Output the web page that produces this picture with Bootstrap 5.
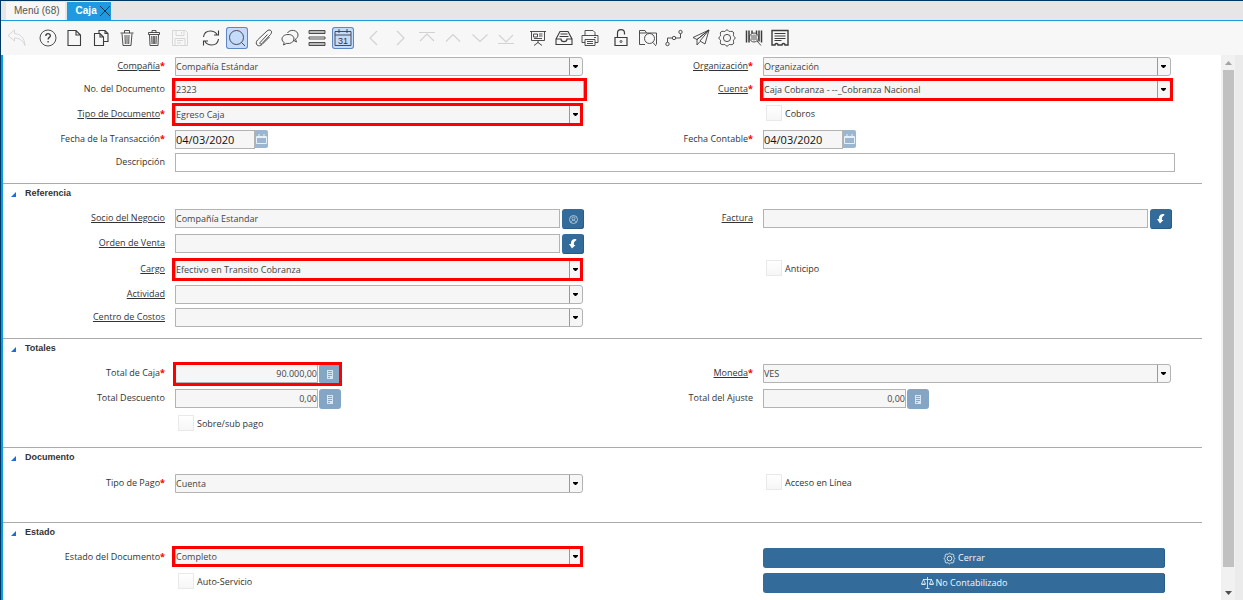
<!DOCTYPE html>
<html lang="es">
<head>
<meta charset="utf-8">
<meta name="viewport" content="width=device-width, initial-scale=1">
<title>Caja</title>
<link href="https://cdn.jsdelivr.net/npm/bootstrap@5.3.0/dist/css/bootstrap.min.css" rel="stylesheet">
<style>
:root { --ink:#333; --line:#b3b3b3; --field:#f6f6f6; --blue:#336b9a; --tab:#1f9ade; }
body { font:9px/12px "Open Sans","Noto Sans",sans-serif; color:var(--ink); background:#fff; border:solid #003764; border-width:1px 0 0 1px; }
/* tabs */
.tabbar { height:20px; background:#e6e6e6; border-bottom:1px solid var(--tab); padding-left:5px; font:10px/18px "Liberation Sans",Arial,sans-serif; }
.tabbar button { border:0; padding:0 5px 0 8px; height:18px; margin-top:1px; background:#f7f7f7; color:#555; }
.tabbar .current { background:var(--tab); color:#fff; font-weight:700; padding:0 0 0 9px; margin-left:2px; gap:2px; }
.tabbar svg { color:#14324e; }
/* toolbar */
.toolbar { height:34px; background:#f7f7f7; padding-left:5px; gap:9px; }
.toolbar > div { width:154px; }
.toolbar > .one { width:22px; }
.toolbar > .three { width:74px; margin-left:1px; }
.toolbar > .seven { width:181px; }
.toolbar button { width:22px; height:22px; padding:1px; border:0; background:none; color:#3c3c3c; display:flex; }
.toolbar button:disabled { color:#d2d2d2; }
.toolbar .pressed { background:#c5dbfb; box-shadow:inset 0 0 0 1px #5e86c2; border-radius:3px; }
svg { fill:none; stroke:currentColor; }
.toolbar svg { width:20px; height:20px; stroke-width:.9; }
/* form */
.formpane { border-left:2px solid #0a9be0; padding-right:19px; }
.group { border:0; border-top:1px solid #aaa; padding-bottom:9px; }
.group.first { border:0; }
.group-head { height:23px; padding-left:8px; font:bold 9px/18px "Liberation Sans",Arial,sans-serif; }
.group-head button { border:0; background:none; padding:0; width:14px; display:flex; }
.line { display:grid; grid-template-columns:minmax(0,172fr) minmax(0,409fr) minmax(0,179fr) minmax(0,409fr) minmax(0,30fr); height:23px; padding-top:2px; align-items:start; }
.line.tall { height:25px; }
.blank { height:18px; }
.cap { text-align:right; padding-right:10px; line-height:18px; white-space:nowrap; }
.cap u { text-underline-offset:1px; }
.cap i { color:red; font-style:normal; font-weight:700; }
.wide { grid-column:2 / 6; margin-right:27px; }
.box { border:1px solid var(--line); border-radius:0; background-color:var(--field); height:19px; width:100%; padding:0; color:#444; font-size:9px; line-height:17px; }
.box.open { background:#fff; }
.num { width:143px; text-align:right; }
.date { width:80px; font-size:11px; color:#111; }
.combo { position:relative; margin-right:1px; }
select.box { appearance:none; border-radius:0 3px 3px 0; display:block;
  background:linear-gradient(#999,#999) right 12px top / 1px 100% no-repeat var(--field); }
.combo svg { position:absolute; right:5px; top:8px; width:5px; height:3px; fill:#000; stroke:none; pointer-events:none; }
.hot { position:relative; }
.hot::after { content:""; position:absolute; inset:-2px 0 -2px -3px; border:3px solid red; pointer-events:none; }
.hot.over::after { right:-3px; }
.hot.past::after { right:-2px; }
.hot.snug::after { right:-1px; left:-2px; }
.hot.flat { margin-top:-1px; }
.hot.flat::after { top:-1px; bottom:-1px; }
.tool { width:22px; height:20px; flex:none; border:0; border-radius:3px; padding:0; background:var(--blue); color:#fff; display:flex; align-items:center; justify-content:center; box-shadow:inset -1px -1px #2a5c87; }
.tool.pale { background:#84a5c3; color:#e6f0fa; box-shadow:none; }
.tool.cal { width:13px; height:18px; border-radius:0 2px 2px 0; background:#9ab6d1; }
.tick { line-height:18px; gap:3px; padding-left:3px; }
.tick input { appearance:none; width:16px; height:16px; margin:0; border:1px solid #e9e9e9; background:linear-gradient(#fff,#f6f6f6); }
.action { height:20px; border:0; border-radius:3px; padding:0; background:var(--blue); color:#f4f8fc; font-size:9px; line-height:18px; margin-right:7px; gap:2px; box-shadow:inset -1px 0 #2a5c87; }
.action svg { stroke-width:.8; }
.gap-tool { gap:2px; }
.gap-calc { gap:1px; }
.drop { margin-top:1px; }
/* scroll bar */
.track { width:14px; background:#f1f1f1; padding:0 1px 0 2px; }
.track div { height:15px; display:flex; align-items:center; justify-content:center; }
.track .thumb { background:#c1c1c1; flex:1; margin-bottom:18px; }
.edge { width:8px; background:#ebebeb; }
</style>
<script src="https://cdn.jsdelivr.net/npm/bootstrap@5.3.0/dist/js/bootstrap.bundle.min.js"></script>
</head>
<body class="d-flex flex-column min-vh-100">

<svg class="d-none">
  <symbol id="down" viewBox="0 0 5 3"><path d="M0 0h5v1L3 3H2L0 1z"/></symbol>
  <symbol id="calc" viewBox="0 0 8 9"><path fill="currentColor" stroke="none" fill-rule="evenodd" opacity=".85" d="M1 0h6v9H1zM2 1v1h4V1zM2 3v1h4V3zM2 5v1h4V5zM2 7v1h2V7z"/></symbol>
  <symbol id="zoomto" viewBox="0 0 8 10"><path fill="currentColor" stroke="none" d="M7 0C3 0 1.800 2 2 5H0l3 4.500L6.500 6H5C4.500 4 5 2.500 7.500 1z"/></symbol>
  <symbol id="cal" viewBox="0 0 11 10"><path d="M.5 2.500h10v7H.5zM.5 3.500h10M3 0v3M8 0v3"/></symbol>
  <symbol id="tri" viewBox="0 0 6 6"><path fill="#1a6fd0" stroke="none" d="M6 0v6H0z"/></symbol>
  <symbol id="gear" viewBox="0 0 20 20"><path d="M8.500 2.700Q10 .8 11.500 2.700Q12 4 13.300 3.400Q15.500 3 16.200 4Q17 4.800 16.500 6.700Q16 8 17.300 8.500Q19.200 10 17.300 11.500Q16 12 16.500 13.300Q17 15.200 16.200 16Q15.500 17 13.300 16.600Q12 16 11.500 17.300Q10 19.200 8.500 17.300Q8 16 6.700 16.600Q4.500 17 3.800 16Q3 15.200 3.500 13.300Q4 12 2.700 11.500Q.8 10 2.700 8.500Q4 8 3.500 6.700Q3 4.800 3.800 4Q4.500 3 6.700 3.400Q8 4 8.500 2.700z"/><circle cx="10" cy="10" r="3.600"/></symbol>
</svg>

<nav class="tabbar d-flex">
  <button type="button">Menú (68)</button>
  <button type="button" class="current d-flex align-items-center">Caja<svg width="12" height="12" viewBox="0 0 12 12"><path d="M1 1l10 10M11 1L1 11"/></svg></button>
</nav>

<div class="toolbar d-flex align-items-center" role="toolbar" aria-label="Acciones">
  <div class="one"><button disabled aria-label="Deshacer"><svg viewBox="0 0 20 20"><path d="M1 7.500L7.500 2v3.500c6 .5 10 4.500 10.500 12C16 12.500 12.500 10 7.500 10v3z"/></svg></button></div>
  <div class="d-flex justify-content-between">
    <button aria-label="Ayuda"><svg viewBox="0 0 20 20"><circle cx="10" cy="10" r="8"/><path stroke-width="1.300" d="M7.800 8c0-3.200 4.600-3 4.600-.3 0 1.700-2.300 1.700-2.300 3.800M10.100 13v1.500"/></svg></button>
    <button aria-label="Nuevo"><svg viewBox="0 0 20 20"><path stroke-width="1.100" d="M4 2.500h8l4.500 4.500v10.500H4zM12 2.500V7h4.500"/></svg></button>
    <button aria-label="Copiar"><svg viewBox="0 0 20 20"><path stroke-width="1.100" d="M8 5V2.500h6l3 3v8h-4M14 2.500v3h3M3.500 5.500H9l3.500 3.500v8.500h-9zM9 5.500V9h3.500"/></svg></button>
    <button aria-label="Borrar"><svg viewBox="0 0 20 20"><path d="M3.500 5h13M7.500 5V2.500h5V5M5 5.500l1 12h8l1-12M8 7l.3 9M10 7v9M12 7l-.3 9"/></svg></button>
    <button aria-label="Borrar selección"><svg viewBox="0 0 20 20"><path d="M4.500 4.500h11v2h-11zM8 4.500v-2h4v2M5.500 6.500l.5 11h8l.5-11M7.700 8l.3 8M9.300 8v8M10.700 8v8M12.300 8l-.3 8"/></svg></button>
    <button disabled aria-label="Guardar"><svg viewBox="0 0 20 20"><path d="M2.500 2.500h13l2 2v13h-15zM6 2.500v5h8v-5M11.500 4v2M5 17.500v-7h10v7M7 12.500h6M7 15h4"/></svg></button>
  </div>
  <div class="d-flex justify-content-between">
    <button aria-label="Refrescar"><svg viewBox="0 0 20 20"><path stroke-width="1.100" d="M2.500 9C3 5 6 3 9.500 3c3 0 5 1.200 6.500 3.500M17.500 2.500V7H13M17.500 11c-.5 4-3.500 6-7 6-3 0-5-1.200-6.500-3.500M2.500 17.500V13H7"/></svg></button>
    <button class="pressed" aria-label="Buscar"><svg viewBox="0 0 20 20"><circle cx="9.500" cy="9.500" r="7"/><path d="M14.500 14.500l3.500 3.500"/></svg></button>
    <button aria-label="Adjunto"><svg viewBox="0 0 20 20"><path d="M13.500 6.500l-7 7.500c-1.500 1.500 0 3 1.500 1.500l8.500-9c3-3.500-1-6-3.500-3.500L3.500 12c-3.500 4 1 8 4.500 4.500L15.500 9"/></svg></button>
    <button aria-label="Conversaciones"><svg viewBox="0 0 20 20"><path d="M7.500 5c2-4 10.500-3.500 10.500 2 0 2-1 3.200-2.500 4l1 3-3.500-2M8 6.500c-3.500 0-6 2-6 4.500 0 1.500.8 2.800 2.200 3.500L3.500 17l3-1.600C10.500 16 14 14 14 11S11.500 6.500 8 6.500z"/></svg></button>
    <button aria-label="Vista de lista"><svg viewBox="0 0 20 20"><path fill="#bbb" d="M2 2.500h16v3H2zM2 14.500h16v3H2z"/><path d="M2 9h16v2H2z"/></svg></button>
    <button class="pressed" aria-label="Calendario"><svg viewBox="0 0 20 20"><path d="M2 3.500h16v14H2zM2 7h16M6 1v4M14 1v4"/><text x="10" y="15.500" text-anchor="middle" font-family="Liberation Sans" font-size="9" fill="#333" stroke="none">31</text></svg></button>
  </div>
  <div class="d-flex justify-content-between">
    <button disabled aria-label="Anterior"><svg viewBox="0 0 20 20"><path stroke-width="1.200" d="M13 3l-7 7 7 7"/></svg></button>
    <button disabled aria-label="Siguiente"><svg viewBox="0 0 20 20"><path stroke-width="1.200" d="M7 3l7 7-7 7"/></svg></button>
    <button disabled aria-label="Primero"><svg viewBox="0 0 20 20"><path stroke-width="1.200" d="M2 4.500h16M3 13l7-7 7 7"/></svg></button>
    <button disabled aria-label="Arriba"><svg viewBox="0 0 20 20"><path stroke-width="1.200" d="M3 13.500l7-7 7 7"/></svg></button>
    <button disabled aria-label="Abajo"><svg viewBox="0 0 20 20"><path stroke-width="1.200" d="M2.500 6.500l7.500 7 7.500-7"/></svg></button>
    <button disabled aria-label="Último"><svg viewBox="0 0 20 20"><path stroke-width="1.200" d="M2 15.500h16M3 7l7 7 7-7"/></svg></button>
  </div>
  <div class="three d-flex justify-content-between">
    <button aria-label="Informe"><svg viewBox="0 0 20 20"><path d="M2 3.500h16M3.500 3.500v9h13v-9M10 12.500V15M6 17.500l4-3 4 3M5.500 6h4v3h-4zM11 6h3.500M11 8h3.500M6 10.500h8"/></svg></button>
    <button aria-label="Archivo"><svg viewBox="0 0 20 20"><path stroke-width="1.100" d="M2 11l4-7.500h8l4 7.500v5.500H2zM2 11h5c0 3.500 6 3.500 6 0h5M6.500 6h7M5.500 8.500h9"/></svg></button>
    <button aria-label="Imprimir"><svg viewBox="0 0 20 20"><path d="M5 7.500v-5h8l2 2v3M5 14.500H2v-7h16v7h-3M5 11.500h10v6H5zM7 13.500h6M7 15.500h6M14 9.500h2"/></svg></button>
  </div>
  <div class="seven d-flex justify-content-between">
    <button aria-label="Bloqueo"><svg viewBox="0 0 20 20"><path stroke-width="1.200" d="M4 9.500h12v8H4zM6.500 9.500V5c0-4.500 7-4.500 7 0v1.500"/><circle cx="10" cy="13.500" r="1"/></svg></button>
    <button aria-label="Explorar"><svg viewBox="0 0 20 20"><path d="M7 16.500H1.500v-14H7L8.500 5h10v11.500M1.500 5h7M15 14.500l3 3.500"/><circle cx="11.500" cy="10.500" r="5"/></svg></button>
    <button aria-label="Flujo de trabajo"><svg viewBox="0 0 20 20"><circle cx="3.500" cy="16" r="1.700"/><circle cx="10" cy="10" r="1.700"/><circle cx="16.500" cy="4" r="1.700"/><path d="M3.500 14v-4h4.800M11.700 10h4.800V5.700"/></svg></button>
    <button aria-label="Solicitudes"><svg viewBox="0 0 20 20"><path d="M18 2L2 9.500l4 2zM18 2L6 11.500V17l3-3.500M18 2l-4 14-5-3z"/></svg></button>
    <button aria-label="Proceso"><svg viewBox="0 0 20 20"><use href="#gear"/></svg></button>
    <button aria-label="Producto"><svg viewBox="0 0 20 20"><path stroke-width="1.500" d="M2.500 2.500v12M5 2.500v12M12.500 2.500v4M15 2.500v11M17.500 2.500v12M8 2.500v3"/><circle cx="10" cy="9.500" r="4.500"/><path d="M13 13l4 4.500M8 7v5M10 6.500v6M12 7v5"/></svg></button>
    <button aria-label="Recibo"><svg viewBox="0 0 20 20"><path stroke-width="1.400" d="M2 2.500h16v14.500h-3c0-2-3-2-3 0H8c0-2-3-2-3 0H2z"/><path d="M4.500 5.500h11M4.500 8h11M4.500 10.500h11M4.500 12.500h7" stroke-width="1.200"/></svg></button>
  </div>
</div>

<main class="d-flex flex-grow-1">
<form class="formpane flex-grow-1">

  <fieldset class="group first">
    <div class="line">
      <label class="cap" for="compania"><u>Compañía</u><i>*</i></label>
      <div class="combo"><select class="box" id="compania"><option>Compañía Estándar</option></select><svg><use href="#down"/></svg></div>
      <label class="cap" for="organizacion"><u>Organización</u><i>*</i></label>
      <div class="combo"><select class="box" id="organizacion"><option>Organización</option></select><svg><use href="#down"/></svg></div>
    </div>
    <div class="line tall">
      <label class="cap" for="numero">No. del Documento</label>
      <div class="hot over d-flex"><input class="box" id="numero" value="2323"></div>
      <label class="cap" for="cuenta"><u>Cuenta</u><i>*</i></label>
      <div class="combo hot past"><select class="box" id="cuenta"><option>Caja Cobranza - --_Cobranza Nacional</option></select><svg><use href="#down"/></svg></div>
    </div>
    <div class="line tall">
      <label class="cap" for="tipodoc"><u>Tipo de Documento</u><i>*</i></label>
      <div class="combo hot"><select class="box" id="tipodoc"><option>Egreso Caja</option></select><svg><use href="#down"/></svg></div>
      <span></span>
      <label class="tick d-flex"><input type="checkbox">Cobros</label>
    </div>
    <div class="line">
      <label class="cap" for="fecha">Fecha de la Transacción<i>*</i></label>
      <div class="d-flex"><input class="box date" id="fecha" value="04/03/2020"><button type="button" class="tool pale cal" aria-label="Elegir fecha"><svg width="11" height="10"><use href="#cal"/></svg></button></div>
      <label class="cap" for="contable">Fecha Contable<i>*</i></label>
      <div class="d-flex"><input class="box date" id="contable" value="04/03/2020"><button type="button" class="tool pale cal" aria-label="Elegir fecha"><svg width="11" height="10"><use href="#cal"/></svg></button></div>
    </div>
    <div class="line">
      <label class="cap" for="descripcion">Descripción</label>
      <div class="wide d-flex"><input class="box open" id="descripcion"></div>
    </div>
  </fieldset>

  <fieldset class="group">
    <div class="group-head d-flex"><button type="button" aria-label="Plegar"><svg class="mt-2" width="5" height="5"><use href="#tri"/></svg></button>Referencia</div>
    <div class="line tall">
      <label class="cap" for="socio"><u>Socio del Negocio</u></label>
      <div class="d-flex gap-tool"><input class="box" id="socio" value="Compañía Estandar"><button type="button" class="tool" aria-label="Buscar socio"><svg width="9" height="9" viewBox="0 0 9 9" opacity=".6"><circle cx="4.500" cy="4.500" r="4"/><circle cx="4.500" cy="3.500" r="1.500"/><path d="M2 7.500c.5-3 4.500-3 5 0"/></svg></button></div>
      <label class="cap" for="factura"><u>Factura</u></label>
      <div class="d-flex gap-tool"><input class="box" id="factura"><button type="button" class="tool" aria-label="Abrir factura"><svg width="8" height="10"><use href="#zoomto"/></svg></button></div>
    </div>
    <div class="line tall">
      <label class="cap" for="orden"><u>Orden de Venta</u></label>
      <div class="d-flex gap-tool"><input class="box" id="orden"><button type="button" class="tool" aria-label="Abrir orden"><svg width="8" height="10"><use href="#zoomto"/></svg></button></div>
    </div>
    <div class="line tall drop">
      <label class="cap" for="cargo"><u>Cargo</u></label>
      <div class="combo hot"><select class="box" id="cargo"><option>Efectivo en Transito Cobranza</option></select><svg><use href="#down"/></svg></div>
      <span></span>
      <label class="tick d-flex"><input type="checkbox">Anticipo</label>
    </div>
    <div class="line">
      <label class="cap" for="actividad"><u>Actividad</u></label>
      <div class="combo"><select class="box" id="actividad"><option></option></select><svg><use href="#down"/></svg></div>
    </div>
    <div class="line">
      <label class="cap" for="centro"><u>Centro de Costos</u></label>
      <div class="combo"><select class="box" id="centro"><option></option></select><svg><use href="#down"/></svg></div>
    </div>
  </fieldset>

  <fieldset class="group">
    <div class="group-head d-flex"><button type="button" aria-label="Plegar"><svg class="mt-2" width="5" height="5"><use href="#tri"/></svg></button>Totales</div>
    <div class="line tall">
      <label class="cap" for="total">Total de Caja<i>*</i></label>
      <div class="d-flex"><div class="hot snug d-flex gap-calc"><input class="box num" id="total" value="90.000,00"><button type="button" class="tool pale" aria-label="Calculadora"><svg width="8" height="9"><use href="#calc"/></svg></button></div></div>
      <label class="cap" for="moneda"><u>Moneda</u><i>*</i></label>
      <div class="combo"><select class="box" id="moneda"><option>VES</option></select><svg><use href="#down"/></svg></div>
    </div>
    <div class="line tall">
      <label class="cap" for="descuento">Total Descuento</label>
      <div class="d-flex gap-calc"><input class="box num" id="descuento" value="0,00"><button type="button" class="tool pale" aria-label="Calculadora"><svg width="8" height="9"><use href="#calc"/></svg></button></div>
      <label class="cap" for="ajuste">Total del Ajuste</label>
      <div class="d-flex gap-calc"><input class="box num" id="ajuste" value="0,00"><button type="button" class="tool pale" aria-label="Calculadora"><svg width="8" height="9"><use href="#calc"/></svg></button></div>
    </div>
    <div class="line tall drop">
      <span></span>
      <label class="tick d-flex"><input type="checkbox">Sobre/sub pago</label>
    </div>
  </fieldset>

  <fieldset class="group">
    <div class="group-head d-flex"><button type="button" aria-label="Plegar"><svg class="mt-2" width="5" height="5"><use href="#tri"/></svg></button>Documento</div>
    <div class="line drop">
      <label class="cap" for="tipopago">Tipo de Pago<i>*</i></label>
      <div class="combo"><select class="box" id="tipopago"><option>Cuenta</option></select><svg><use href="#down"/></svg></div>
      <span></span>
      <label class="tick d-flex"><input type="checkbox">Acceso en Línea</label>
    </div>
    <div class="blank"></div>
  </fieldset>

  <fieldset class="group pb-0">
    <div class="group-head d-flex"><button type="button" aria-label="Plegar"><svg class="mt-2" width="5" height="5"><use href="#tri"/></svg></button>Estado</div>
    <div class="line tall">
      <label class="cap" for="estado">Estado del Documento<i>*</i></label>
      <div class="combo hot flat"><select class="box" id="estado"><option>Completo</option></select><svg><use href="#down"/></svg></div>
      <span></span>
      <button type="button" class="action d-flex align-items-center justify-content-center"><svg width="13" height="13"><use href="#gear" stroke-width="1.300"/></svg>Cerrar</button>
    </div>
    <div class="line tall">
      <span></span>
      <label class="tick d-flex"><input type="checkbox">Auto-Servicio</label>
      <span></span>
      <button type="button" class="action d-flex align-items-center justify-content-center"><svg width="13" height="12" viewBox="0 0 13 12"><path d="M6.500 0v11M4.500 11.500h4M2 2.500h9M2.500 2.500l-2 4.500h4zM10.500 2.500l-2 4.500h4zM.5 7.500h4M8.500 7.500h4"/></svg>No Contabilizado</button>
    </div>
  </fieldset>
</form>

<div class="track d-flex flex-column" aria-hidden="true">
  <div><svg width="7" height="4" viewBox="0 0 7 4"><path fill="#a3a3a3" stroke="none" d="M0 4l3.500-4L7 4z"/></svg></div>
  <div class="thumb"></div>
  <div><svg width="7" height="4" viewBox="0 0 7 4"><path fill="#505050" stroke="none" d="M0 0h7L3.500 4z"/></svg></div>
</div>
<div class="edge"></div>
</main>
</body>
</html>
